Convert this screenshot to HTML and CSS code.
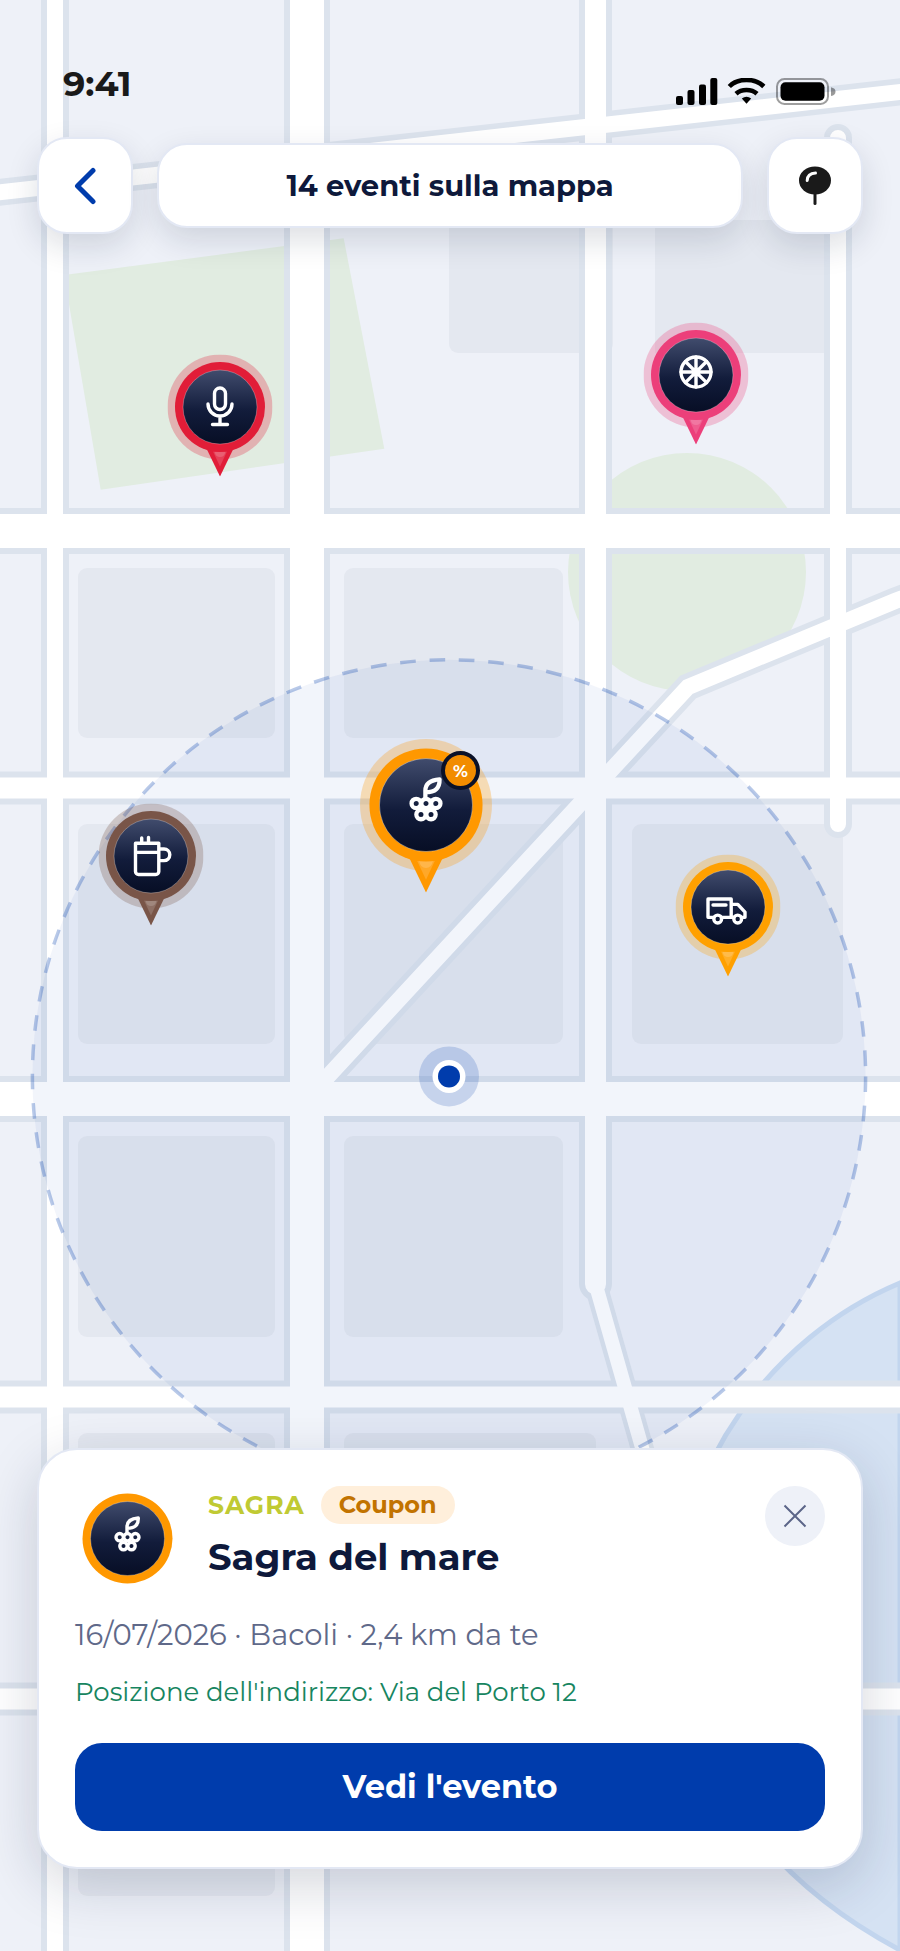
FILE: index.html
```html
<!DOCTYPE html>
<html lang="it">
<head>
<meta charset="utf-8">
<meta name="viewport" content="width=device-width, initial-scale=1">
<title>Eventi sulla mappa</title>
<link rel="stylesheet" href="styles.css">
</head>
<body>
<svg class="defs" aria-hidden="true">
  <defs>
    <linearGradient id="disc" x1="0" y1="0" x2="0" y2="1">
      <stop offset="0" stop-color="#414c6d"/>
      <stop offset=".55" stop-color="#121c3b"/>
      <stop offset="1" stop-color="#070e25"/>
    </linearGradient>
    <symbol id="pin" viewBox="0 0 105 122">
      <circle class="pin-halo" cx="52.5" cy="52.5" r="52.5"/>
      <path class="pin-fill" d="M38 92h29L52.500 122z"/>
      <path class="pin-glint" d="M45.500 97h14L52.500 112z"/>
      <path class="pin-glint" d="M47 97h11q-1 5.500-5.500 5.500T47 97z"/>
      <circle class="pin-fill" cx="52.5" cy="52.500" r="45"/>
      <circle class="pin-disc" cx="52.5" cy="52.500" r="37"/>
    </symbol>
    <symbol id="ring" viewBox="0 0 105 105">
      <circle class="pin-fill" cx="52.5" cy="52.5" r="45"/>
      <circle class="pin-disc" cx="52.5" cy="52.5" r="37"/>
    </symbol>
    <g id="grapes" class="glyph">
      <circle cx="-7.800" cy="-1.300" r="3.700"/>
      <circle cx="0" cy="-1.300" r="3.700"/>
      <circle cx="7.800" cy="-1.300" r="3.700"/>
      <circle cx="-4" cy="7.600" r="3.700"/>
      <circle cx="4" cy="7.600" r="3.700"/>
      <path d="M-.5-6v-5.500C-.5-17.500 3.500-20 10.800-20.500C11-13.500 7.500-10.200-.5-10.200"/>
    </g>
  </defs>
</svg>

<main class="screen">
  <svg class="map" viewBox="0 0 900 1951" preserveAspectRatio="xMidYMid slice" aria-hidden="true">
    <g class="park">
      <path d="M64 275L343.700 238.300L384.300 448.700L100.700 489.700z"/>
      <circle cx="687" cy="572" r="119"/>
    </g>
    <path class="water" d="M900 1283C768 1338 680 1470 675 1600C670 1740 750 1870 900 1950z"/>
    <g class="block">
      <rect x="449" y="220" width="164" height="133" rx="9"/>
      <rect x="655" y="220" width="190" height="133"/>
      <rect x="78" y="568" width="197" height="170" rx="9"/>
      <rect x="344" y="568" width="219" height="170" rx="9"/>
      <rect x="78" y="824" width="197" height="220" rx="9"/>
      <rect x="344" y="824" width="219" height="220" rx="9"/>
      <rect x="632" y="824" width="211" height="220" rx="9"/>
      <rect x="78" y="1136" width="197" height="201" rx="9"/>
      <rect x="344" y="1136" width="219" height="201" rx="9"/>
      <rect x="78" y="1433" width="197" height="463" rx="9"/>
      <rect x="344" y="1433" width="252" height="300" rx="9"/>
    </g>
    <g class="road casing">
      <path stroke-width="46" d="M307-40V2000M-40 531H940M-40 1099H940"/>
      <path stroke-width="33" d="M-40 788H940M-40 1397H940M-40 1699H940M595.500-40V1284"/>
      <path stroke-width="28" d="M55-40V2000M838 138V824"/>
      <path stroke-width="27" d="M-40 196.700L940 87.500M307 1099L688 687L895 601L950 580"/>
      <path stroke-width="23" d="M595.500 1284L670 1546"/>
    </g>
    <g class="road lane">
      <path stroke-width="34" d="M307-40V2000M-40 531H940M-40 1099H940"/>
      <path stroke-width="21" d="M-40 788H940M-40 1397H940M-40 1699H940M595.500-40V1284"/>
      <path stroke-width="16" d="M55-40V2000M838 138V824M-40 196.700L940 87.500M307 1099L688 687L895 601L950 580"/>
      <path stroke-width="14" d="M595.500 1284L670 1546"/>
    </g>
    <circle class="range" cx="449" cy="1076.400" r="416.600"/>
    <circle class="here-halo" cx="449" cy="1076.400" r="30"/>
    <circle class="here-rim" cx="449" cy="1076.400" r="16.500"/>
    <circle class="here-dot" cx="449" cy="1076.400" r="11"/>
  </svg>

  <button class="pin pin-red" style="left:24.44%;top:20.88%" aria-label="Concerto">
    <svg viewBox="0 0 105 122"><use href="#pin"/>
      <g class="glyph" transform="translate(52.500 52.500)">
        <rect x="-5.500" y="-19" width="11" height="21.500" rx="5.500"/>
        <path d="M-12-3a12 12 0 0 0 24 0M0 9V17.500M-7.500 17.500H7.500"/>
      </g></svg>
  </button>
  <button class="pin pin-pink" style="left:77.33%;top:19.24%" aria-label="Luna park">
    <svg viewBox="0 0 105 122"><use href="#pin"/>
      <g class="glyph" transform="translate(52.500 49.500)">
        <circle r="15"/>
        <path d="M0-15V15M-15 0H15M-10.600-10.600L10.600 10.600M10.600-10.600L-10.600 10.600"/>
        <circle r="2.500"/>
      </g></svg>
  </button>
  <button class="pin pin-brown" style="left:16.78%;top:43.90%" aria-label="Festa della birra">
    <svg viewBox="0 0 105 122"><use href="#pin"/>
      <g class="glyph" transform="translate(52.500 52.500)">
        <path d="M-15.500-12.800H7.800V15.500a3 3 0 0 1-3 3H-12.500a3 3 0 0 1-3-3zM-15.500-3.700H7.800M-9.300-13V-18M-2.500-13V-18.500M8-7h5a5.800 5.800 0 0 1 0 11.600H8"/>
      </g></svg>
  </button>
  <button class="pin pin-amber" style="left:80.89%;top:46.47%" aria-label="Street food">
    <svg viewBox="0 0 105 122"><use href="#pin"/>
      <g class="glyph" transform="translate(52.500 52.500)">
        <path d="M-14.500 10.300H-20V-8H3.200V10.300H-6M3.200-2.700H9.800L17 5V10.300H14M3.200 10.300H5.500M-15-2H-2"/>
        <circle cx="-10.300" cy="12" r="3.900"/>
        <circle cx="9.700" cy="12" r="3.900"/>
      </g></svg>
  </button>
  <button class="pin pin-large pin-orange" style="left:47.33%;top:41.27%" aria-label="Sagra del mare">
    <svg viewBox="0 0 105 122"><use href="#pin"/>
      <use href="#grapes" x="52.500" y="52.500"/></svg>
    <span class="badge">%</span>
  </button>

  <div class="overlay">
    <div class="status">
      <span class="time">9:41</span>
      <svg class="status-icons" viewBox="0 0 161 27" aria-hidden="true">
        <rect x="0" y="18" width="7" height="9" rx="2"/>
        <rect x="11.500" y="12" width="7" height="15" rx="2"/>
        <rect x="23" y="6.500" width="7" height="20.500" rx="2"/>
        <rect x="34.300" y="0" width="7" height="27" rx="2"/>
        <g fill="none" stroke="#000" stroke-width="4.600">
          <path d="M53.300 8.500C62-.3 79-.3 87.800 8.500"/>
          <path d="M60 15.800C65.500 10.800 75.500 10.800 81 15.800"/>
        </g>
        <path d="M65.800 20.500Q70.500 17 75.200 20.500L70.500 25.700z"/>
        <rect class="cell" x="101" y="1" width="51" height="25" rx="7.500"/>
        <rect x="104.500" y="4.300" width="44" height="18.500" rx="5"/>
        <path fill="#000" opacity=".4" d="M155 9.300q4.500 1 4.500 4.400t-4.500 4.400z"/>
      </svg>
    </div>

    <header class="topbar">
      <button class="square" aria-label="Indietro">
        <svg class="icon-back" viewBox="0 0 24 38"><path d="M20 3.500L4.500 19L20 34.500"/></svg>
      </button>
      <h1 class="count">14 eventi sulla mappa</h1>
      <button class="square" aria-label="La mia posizione">
        <svg class="icon-tack" viewBox="0 0 32 40">
          <ellipse cx="16" cy="14.500" rx="16" ry="14"/>
          <path class="stick" d="M16 26V37.500"/>
          <path class="shine" d="M8.200 14.500Q8.500 7.300 16.500 7"/>
        </svg>
      </button>
    </header>

    <article class="card">
      <div class="card-head">
        <svg class="card-icon pin-orange" viewBox="0 0 105 105" aria-hidden="true"><use href="#ring"/>
          <use href="#grapes" x="52.500" y="52.500"/></svg>
        <div class="card-title">
          <div class="tags"><span class="category">SAGRA</span><span class="coupon">Coupon</span></div>
          <h2>Sagra del mare</h2>
        </div>
        <button class="close" aria-label="Chiudi">
          <svg viewBox="0 0 24 24"><path d="M1.500 1.500L22.500 22.500M22.500 1.500L1.500 22.500"/></svg>
        </button>
      </div>
      <p class="meta">16/07/2026 · Bacoli · 2,4 km da te</p>
      <p class="address">Posizione dell'indirizzo: Via del Porto 12</p>
      <button class="cta">Vedi l'evento</button>
    </article>
  </div>
</main>
</body>
</html>
```
FILE: styles.css
```css
* { box-sizing: border-box; }

body {
  margin: 0;
  font-family: Montserrat, Inter, "Open Sans", sans-serif;
  color: #0e193b;
}

button {
  font: inherit;
  border: 0;
  padding: 0;
  background: none;
  cursor: pointer;
}

svg { display: block; }
.defs { position: absolute; width: 0; height: 0; }

.screen {
  position: relative;
  min-height: 100vh;
  overflow: hidden;
  display: flex;
  background: #eef1f8;
}

/* map */
.map { position: absolute; inset: 0; width: 100%; height: 100%; }
.park { fill: #e1ece1; }
.block { fill: #e4e8f0; }
.water { fill: #d5e2f3; stroke: #c2d5ee; stroke-width: 5; }
.road { fill: none; stroke-linecap: round; }
.casing { stroke: #dce3ed; }
.lane { stroke: #fff; }
.range {
  fill: rgba(0, 60, 173, .05);
  stroke: rgba(0, 60, 173, .28);
  stroke-width: 3.500;
  stroke-dasharray: 15.700 13.740;
}
.here-halo { fill: rgba(0, 60, 173, .18); }
.here-rim { fill: #fff; }
.here-dot { fill: #003cac; }

/* pins */
.pin {
  position: absolute;
  width: 105px;
  transform: translate(-50%, -43%);
}
.pin svg { width: 100%; }
.pin-large { width: 132px; }
.pin-red { color: #e11d38; }
.pin-pink { color: #ec3f7a; }
.pin-brown { color: #795548; }
.pin-amber { color: #ffa000; }
.pin-orange { color: #ff9800; }
.pin-halo { fill: currentColor; opacity: .28; }
.pin-fill { fill: currentColor; }
.pin-glint { fill: #fff; opacity: .16; }
.pin-disc { fill: url(#disc); stroke: rgba(255, 255, 255, .45); stroke-width: .6; }
.glyph {
  fill: none;
  stroke: #fff;
  stroke-width: 3.400;
  stroke-linecap: round;
  stroke-linejoin: round;
}
.badge {
  position: absolute;
  top: 12px;
  right: 12px;
  width: 39px;
  height: 39px;
  border: 4px solid #0a1128;
  border-radius: 50%;
  background: #f28c00;
  color: #fff;
  font-size: 17px;
  font-weight: 700;
  line-height: 32px;
  text-align: center;
}

/* interface over the map */
.overlay {
  position: relative;
  flex: 1;
  display: flex;
  flex-direction: column;
  padding: 60px 37px 82px;
  pointer-events: none;
}
.overlay button { pointer-events: auto; }

.status {
  display: flex;
  justify-content: space-between;
  align-items: center;
  height: 48px;
  padding: 0 26px;
}
.time { font-size: 35px; font-weight: 700; line-height: 48px; color: #1a1a1a; }
.status-icons { width: 161px; height: 27px; margin-top: 15px; }
.cell { fill: none; stroke: #000; stroke-opacity: .38; stroke-width: 2; }

.topbar {
  display: flex;
  align-items: center;
  gap: 24px;
  margin-top: 29px;
}
.square, .count {
  background: #fff;
  border: 2px solid #e3e8f4;
  border-radius: 30px;
  box-shadow: 0 12px 32px rgba(14, 25, 59, .14);
}
.square {
  flex: none;
  width: 96px;
  height: 97px;
  display: grid;
  place-items: center;
}
.count {
  flex: 1;
  margin: 0;
  padding: 20px;
  font-size: 29px;
  font-weight: 700;
  line-height: 41px;
  text-align: center;
}
.icon-back { width: 24px; fill: none; stroke: #003cac; stroke-width: 5; stroke-linecap: round; stroke-linejoin: round; }
.icon-tack { width: 32px; fill: #1a1a1a; }
.stick { stroke: #1a1a1a; stroke-width: 3; stroke-linecap: round; }
.shine { fill: none; stroke: #fff; stroke-width: 3; stroke-linecap: round; }

.card {
  margin-top: auto;
  padding: 36px;
  background: #fff;
  border: 2px solid #e3e8f4;
  border-radius: 40px;
  box-shadow: 0 16px 56px rgba(14, 25, 59, .18);
}
.card-head { display: flex; align-items: flex-start; gap: 28px; }
.card-icon { flex: none; width: 105px; }
.card-title { flex: 1; }
.tags { display: flex; align-items: center; gap: 16px; }
.category { font-size: 25px; font-weight: 700; line-height: 38px; letter-spacing: 1px; color: #c0ca33; }
.coupon {
  padding: 0 18px;
  border-radius: 19px;
  background: #ffefdb;
  color: #c27300;
  font-size: 24px;
  font-weight: 700;
  line-height: 38px;
}
.card h2 { margin: 10px 0 0; font-size: 37px; font-weight: 700; line-height: 46px; }
.close {
  flex: none;
  width: 60px;
  height: 60px;
  border-radius: 50%;
  background: #eef1f8;
  display: grid;
  place-items: center;
}
.close svg { width: 24px; fill: none; stroke: #5b6588; stroke-width: 2; }
.meta { margin: 24px 0 0; font-size: 29px; line-height: 40px; color: #5f6989; }
.address { margin: 19px 0 0; font-size: 26px; line-height: 36px; color: #178560; }
.cta {
  display: block;
  width: 100%;
  margin-top: 33px;
  border-radius: 27px;
  background: #003cac;
  color: #fff;
  font-size: 32px;
  font-weight: 700;
  line-height: 88px;
}
```
